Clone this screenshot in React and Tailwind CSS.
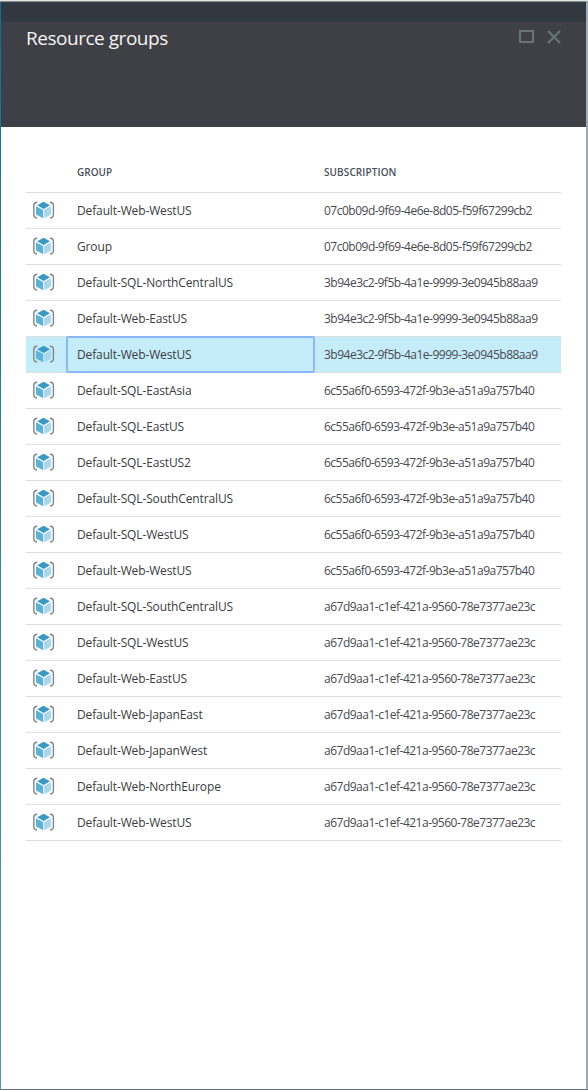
const SUBSCRIPTIONS = {
  a: "07c0b09d-9f69-4e6e-8d05-f59f67299cb2",
  b: "3b94e3c2-9f5b-4a1e-9999-3e0945b88aa9",
  c: "6c55a6f0-6593-472f-9b3e-a51a9a757b40",
  d: "a67d9aa1-c1ef-421a-9560-78e7377ae23c",
};

const ROWS = [
  ["Default-Web-WestUS", "a"],
  ["Group", "a"],
  ["Default-SQL-NorthCentralUS", "b"],
  ["Default-Web-EastUS", "b"],
  ["Default-Web-WestUS", "b"],
  ["Default-SQL-EastAsia", "c"],
  ["Default-SQL-EastUS", "c"],
  ["Default-SQL-EastUS2", "c"],
  ["Default-SQL-SouthCentralUS", "c"],
  ["Default-SQL-WestUS", "c"],
  ["Default-Web-WestUS", "c"],
  ["Default-SQL-SouthCentralUS", "d"],
  ["Default-SQL-WestUS", "d"],
  ["Default-Web-EastUS", "d"],
  ["Default-Web-JapanEast", "d"],
  ["Default-Web-JapanWest", "d"],
  ["Default-Web-NorthEurope", "d"],
  ["Default-Web-WestUS", "d"],
];

const SELECTED = 4;

function ResourceGroupIcon() {
  return (
    <svg width="22" height="18" viewBox="0 0 22 18" className="block">
      <path d="M4.2 1.2Q.8 1.4 .8 4.4V13.8Q.8 16.8 4.2 17" fill="none" stroke="#858585" strokeWidth="1.4" />
      <path d="M17 1.2Q20.4 1.4 20.4 4.4V13.8Q20.4 16.8 17 17" fill="none" stroke="#858585" strokeWidth="1.4" />
      <path d="M10.6 .8L17 4.3L10.6 7.9L4.2 4.3Z" fill="#3999c6" />
      <path d="M3 5.2L10.1 9V17.2L3 13.4Z" fill="#59b4d9" />
      <path d="M18.2 5.2L11.1 9V17.2L18.2 13.4Z" fill="#a9d8ec" />
    </svg>
  );
}

function Header() {
  return (
    <header className="h-[125px] bg-[#3f4045]">
      <div className="h-5 bg-[#32383f]" />
      <div className="flex items-start justify-between pl-[25px] pr-[25px]">
        <h1 className="mt-[2px] whitespace-nowrap text-[19px] leading-7 tracking-[-0.47px] text-[#f4f4f4]">Resource groups</h1>
        <div className="mt-2 flex gap-[13px]">
          <svg width="15" height="13" viewBox="0 0 15 13">
            <rect x="1" y="1" width="13" height="11" fill="none" stroke="#69737b" strokeWidth="2" />
          </svg>
          <svg width="14" height="14" viewBox="0 0 14 14">
            <path d="M1 1L13 13M13 1L1 13" fill="none" stroke="#69737b" strokeWidth="2.1" />
          </svg>
        </div>
      </div>
    </header>
  );
}

function Row({ name, subscription, selected }) {
  return (
    <div className={`flex h-9 border-b border-[#dcdddd] ${selected ? "bg-[#c5edf9]" : ""}`}>
      <div className="w-[41px] pl-[7px] pt-2">
        <ResourceGroupIcon />
      </div>
      <div
        className={`flex w-[247px] items-center whitespace-nowrap pl-[10px] text-[12px] tracking-[-0.13px] text-[#3b3b3e] ${
          selected ? "rounded-[1px] outline-2 -outline-offset-1 outline-[#8ab8f8]" : ""
        }`}
      >
        {name}
      </div>
      <div className="flex items-center whitespace-nowrap pl-[10px] text-[12px] tracking-[-0.5px] text-[#49494e]">
        {subscription}
      </div>
    </div>
  );
}

export default function App() {
  return (
    <div className="flex h-[1090px] w-[588px] flex-col border-b border-[#65717b] bg-white font-['Open_Sans','Noto_Sans',sans-serif]">
      <div className="h-px bg-[#dfe2e1]" />
      <div className="h-px bg-[#8c9496]" />
      <div className="flex min-h-0 flex-1">
        <div className="w-px bg-linear-to-b from-[#146b98] to-[#4f9abb]" />
        <main className="flex-1">
          <Header />
          <section className="pl-[25px] pr-[25px] pt-[26px]">
            <div className="flex h-10 border-b border-[#dcdddd] text-[10px] font-semibold leading-[14px] text-[#4a515b]">
              <div className="w-[298px] pl-[51px] pt-3">GROUP</div>
              <div className="pt-3 tracking-[0.1px]">SUBSCRIPTION</div>
            </div>
            {ROWS.map(([name, sub], i) => (
              <Row key={i} name={name} subscription={SUBSCRIPTIONS[sub]} selected={i === SELECTED} />
            ))}
          </section>
        </main>
        <div className="w-[2px] bg-[#9facb8]" />
      </div>
    </div>
  );
}
